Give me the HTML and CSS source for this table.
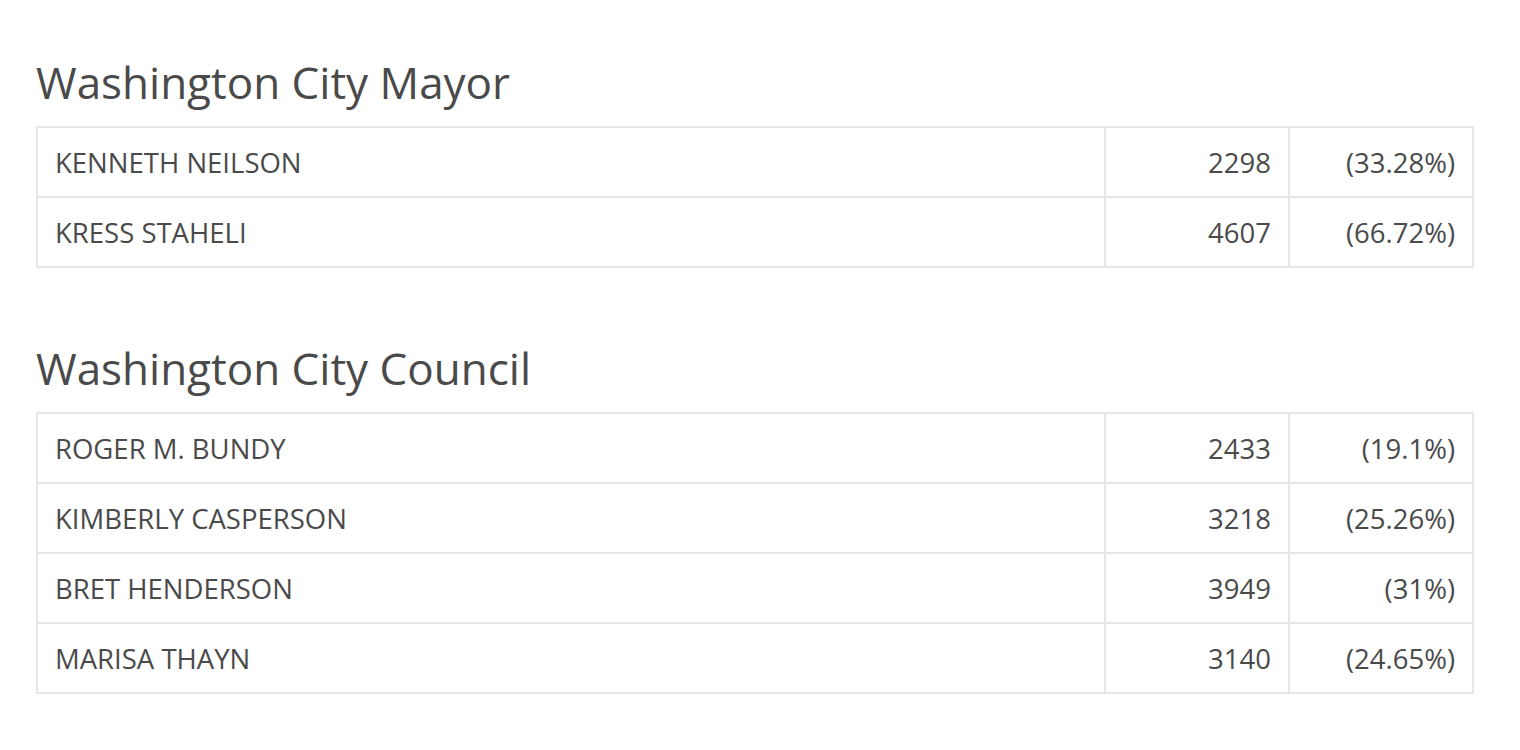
FILE: index.html
```html
<!DOCTYPE html>
<html lang="en">
<head>
  <meta charset="UTF-8">
  <title>Washington City Results</title>
  <link rel="stylesheet" href="styles.css">
</head>
<body>
  <main>
    <section class="race">
      <h2>Washington City Mayor</h2>
      <table class="results">
        <tr><td class="name">KENNETH NEILSON</td><td class="votes">2298</td><td class="pct">(33.28%)</td></tr>
        <tr><td class="name">KRESS STAHELI</td><td class="votes">4607</td><td class="pct">(66.72%)</td></tr>
      </table>
    </section>

    <section class="race">
      <h2>Washington City Council</h2>
      <table class="results">
        <tr><td class="name">ROGER M. BUNDY</td><td class="votes">2433</td><td class="pct">(19.1%)</td></tr>
        <tr><td class="name">KIMBERLY CASPERSON</td><td class="votes">3218</td><td class="pct">(25.26%)</td></tr>
        <tr><td class="name">BRET HENDERSON</td><td class="votes">3949</td><td class="pct">(31%)</td></tr>
        <tr><td class="name">MARISA THAYN</td><td class="votes">3140</td><td class="pct">(24.65%)</td></tr>
      </table>
    </section>
  </main>
</body>
</html>
```

FILE: styles.css
```css
:root {
  --text: #4a4a4a;
  --line: #e6e6e6;
}
* {
  box-sizing: border-box;
}
body, h2 {
  margin: 0;
  padding: 0;
}
body {
  font-family: "Open Sans", "Liberation Sans", Arial, sans-serif;
  background: #fff;
  color: var(--text);
}
main {
  padding: 52px 46px 0 36px;
}
.race {
  margin-bottom: 70px;
}
h2 {
  font-size: 44px;
  font-weight: 400;
  line-height: 60px;
  margin-bottom: 14px;
}
.results {
  width: 100%;
  border-collapse: collapse;
  border: 2px solid var(--line);
}
.results td {
  border: 2px solid var(--line);
  padding: 0 17px;
  height: 70px;
  font-size: 27.5px;
}
.votes, .pct {
  text-align: right;
  width: 184px;
}
```
